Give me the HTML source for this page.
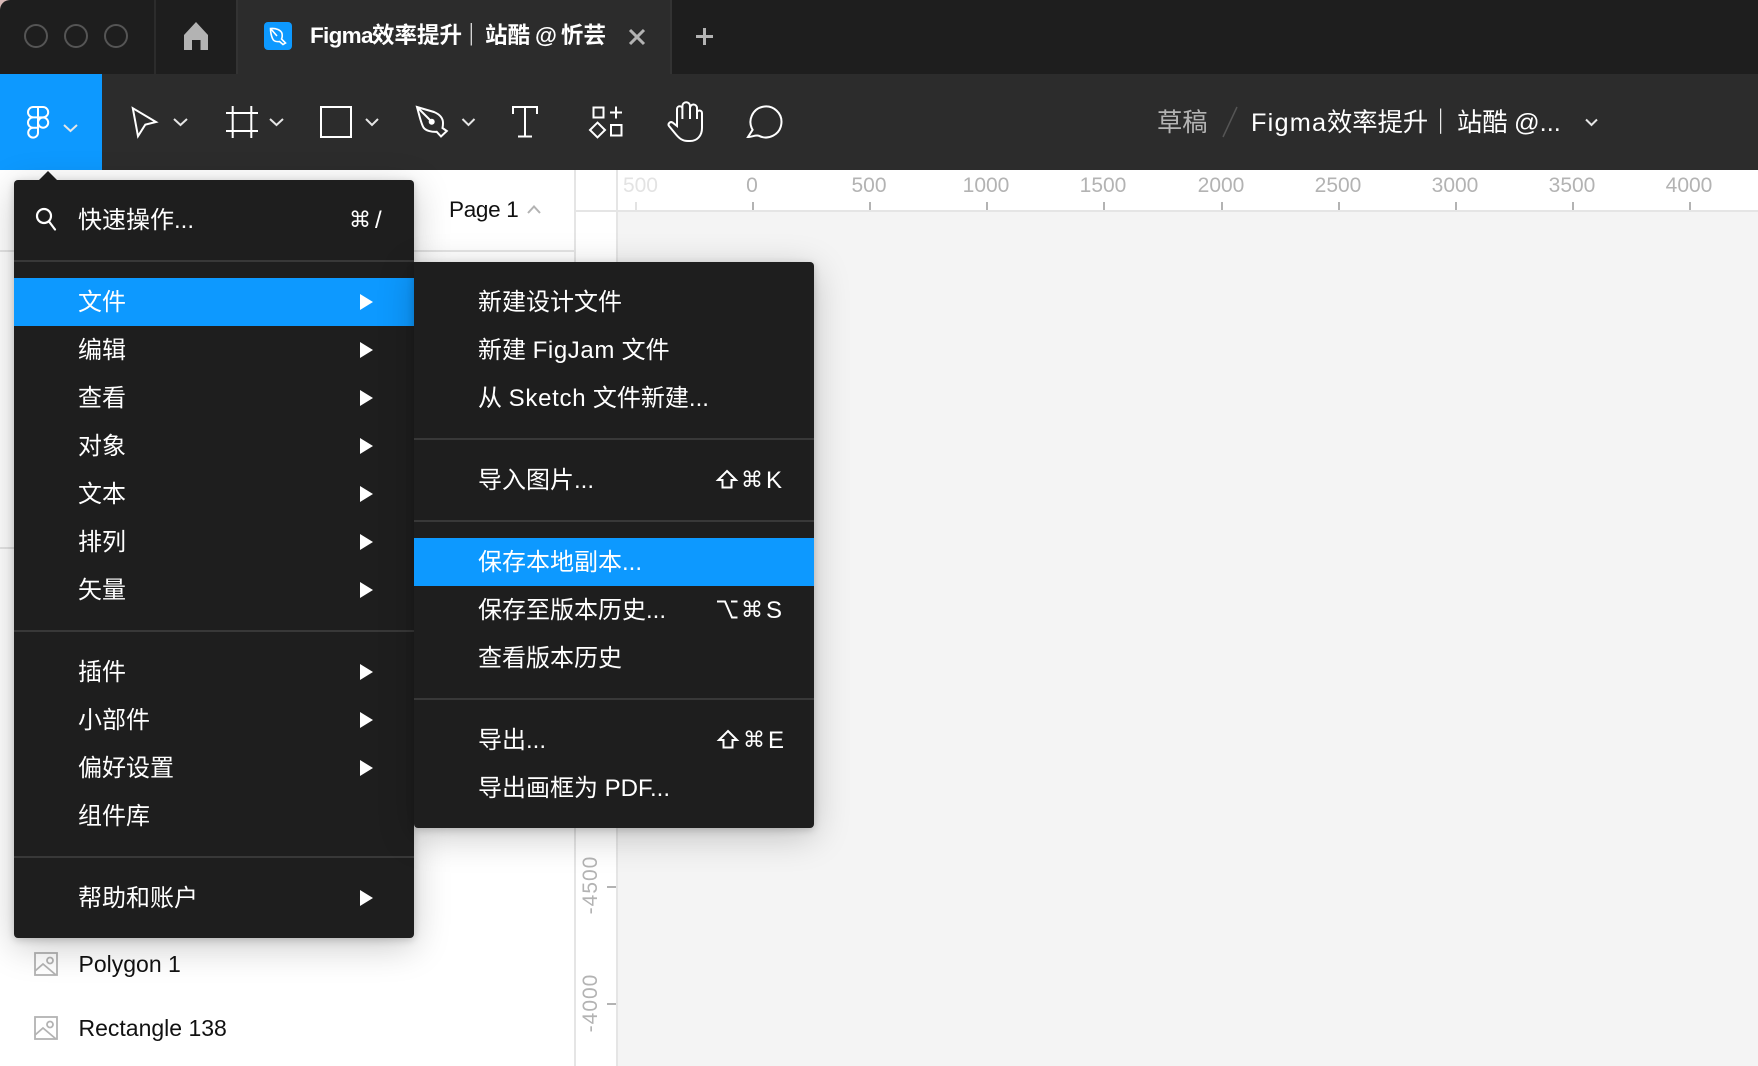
<!DOCTYPE html>
<html lang="zh"><head><meta charset="utf-8"><title>Figma</title>
<style>
html,body{margin:0;padding:0;width:1758px;height:1066px;overflow:hidden;background:#fff}
body{position:relative;font-family:"Liberation Sans","Noto Sans CJK SC",sans-serif;-webkit-font-smoothing:antialiased}
div,span,svg{position:absolute}
span.i{position:static}
svg{left:0;top:0;overflow:visible}
.r{left:0;width:400px;height:48px;line-height:50px;white-space:nowrap;color:#fff;font-size:24px}
.h{background:#0d99ff}
.l,.ls{left:64px;position:absolute}
.a{left:346px;top:16px;width:0;height:0;border-left:13px solid #fff;border-top:8px solid transparent;border-bottom:8px solid transparent}
.d{height:2px;background:#383838;left:0;right:0}
.rt{color:#b3b3b3;font-size:21px;line-height:24px;top:174px;width:80px;text-align:center}
.tk{top:202px;width:2px;height:8px;background:#b3b3b3}
.sc{font-size:24px;color:#fff;line-height:50px;top:0}
.sy{font-family:"DejaVu Sans",sans-serif;font-size:22px}
.tb,.bc{white-space:nowrap}
.tb{top:20px;line-height:32px;font-size:22.5px;font-weight:700;color:#fff}
.bc{top:105px;line-height:36px;font-size:25.3px;color:#fff}
.v{left:551px;width:80px;height:24px;line-height:24px;text-align:center;color:#b3b3b3;font-size:21px;letter-spacing:1px;transform:rotate(-90deg)}
</style></head><body>
<!-- window corner -->
<div style="left:0;top:0;width:12px;height:12px;background:#d8b9b7"></div>
<!-- tab bar -->
<div style="left:0;top:0;width:1758px;height:74px;background:#1e1e1e;border-top-left-radius:10px"></div>
<div style="left:237px;top:0;width:433px;height:74px;background:#2c2c2c"></div>
<div style="left:154px;top:0;width:2px;height:74px;background:#2c2c2c"></div>
<div style="left:236px;top:0;width:2px;height:74px;background:#333"></div>
<div style="left:670px;top:0;width:2px;height:74px;background:#333"></div>
<!-- toolbar -->
<div style="left:0;top:74px;width:1758px;height:96px;background:#2c2c2c"></div>
<div style="left:0;top:74px;width:102px;height:96px;background:#0d99ff"></div>
<!-- tab text -->
<div class="tb" style="left:310px;letter-spacing:-.7px">Figma</div>
<div class="tb" style="left:372px">效率提升</div>
<div class="tb" style="left:460px">｜</div>
<div class="tb" style="left:485px">站酷</div>
<div class="tb" style="left:535px">@</div>
<div class="tb" style="left:561px">忻芸</div>
<div class="bc" style="left:1157px;color:#b3b3b3">草稿</div>
<div class="bc" style="left:1251px;letter-spacing:1.200px">Figma</div>
<div class="bc" style="left:1327px">效率提升</div>
<div class="bc" style="left:1428px">｜</div>
<div class="bc" style="left:1457px">站酷</div>
<div class="bc" style="left:1514px">@...</div>
<!-- panel + canvas -->
<div style="left:617px;top:212px;width:1141px;height:854px;background:#f4f4f4"></div>
<div style="left:574px;top:170px;width:2px;height:896px;background:#e5e5e5"></div>
<div style="left:616px;top:170px;width:2px;height:896px;background:#e5e5e5"></div>
<div style="left:575px;top:210px;width:1183px;height:2px;background:#e5e5e5"></div>
<div style="left:0;top:250px;width:575px;height:2px;background:#e5e5e5"></div>
<div style="left:0;top:547px;width:20px;height:2px;background:#e5e5e5"></div>
<div style="left:449px;top:194px;line-height:32px;font-size:22.5px;letter-spacing:-.3px;color:#111;white-space:nowrap">Page 1</div>
<!-- top ruler -->
<div class="rt" style="left:618px;width:40px;color:#e3e3e3;text-align:right;overflow:hidden">500</div>
<div class="rt" style="left:712px">0</div><div class="rt" style="left:829px">500</div><div class="rt" style="left:946px">1000</div><div class="rt" style="left:1063px">1500</div><div class="rt" style="left:1181px">2000</div><div class="rt" style="left:1298px">2500</div><div class="rt" style="left:1415px">3000</div><div class="rt" style="left:1532px">3500</div><div class="rt" style="left:1649px">4000</div>
<div class="tk" style="left:635px;background:#e3e3e3"></div><div class="tk" style="left:752px"></div><div class="tk" style="left:869px"></div><div class="tk" style="left:986px"></div><div class="tk" style="left:1103px"></div><div class="tk" style="left:1221px"></div><div class="tk" style="left:1338px"></div><div class="tk" style="left:1455px"></div><div class="tk" style="left:1572px"></div><div class="tk" style="left:1689px"></div>
<!-- left ruler -->
<div class="v" style="top:873px">-4500</div>
<div class="v" style="top:991px">-4000</div>
<div style="left:607px;top:886px;width:9px;height:2px;background:#b3b3b3"></div>
<div style="left:607px;top:1003px;width:9px;height:2px;background:#b3b3b3"></div>
<!-- layers -->
<div style="left:78.500px;top:948px;line-height:32px;font-size:23px;color:#111;white-space:nowrap">Polygon 1</div>
<div style="left:78.500px;top:1012px;line-height:32px;font-size:23px;color:#111;white-space:nowrap">Rectangle 138</div>
<!-- icons svg -->
<svg width="1758" height="1066" fill="none" stroke="#fff" stroke-width="2">
<g stroke="#555"><circle cx="36" cy="36" r="11"/><circle cx="76" cy="36" r="11"/><circle cx="116" cy="36" r="11"/></g>
<path d="M196 22L208 35V50H200.500V40H192V50H184V35Z" fill="#b3b3b3" stroke="none"/>
<rect x="264" y="22" width="28" height="28" rx="4" fill="#0d99ff" stroke="none"/>
<path d="M270.500 28.500C276 28 281 30 282 33.500C282.500 36 282 38 281.500 39L285.500 43L283 44.500L279.500 41.500C276 42 273.500 41 272.500 38.500C271 35 270.500 32 270.500 28.500ZM270.500 28.500L277 36" stroke-width="1.600"/>
<path d="M630 30L644 44M644 30L630 44" stroke="#b3b3b3" stroke-width="3"/>
<path d="M704.500 28V45M696 36.500H713" stroke="#b3b3b3" stroke-width="3"/>
<!-- figma logo -->
<path d="M38 107H33.200a5.200 5.200 0 0 0 0 10.400H38ZM38 107H43a5.200 5.200 0 0 1 0 10.400H38ZM38 117.400H33.200a5.200 5.200 0 0 0 0 10.400H38ZM48.200 122.600a5.100 5.100 0 1 1-10.200 0a5.100 5.100 0 0 1 10.200 0ZM38 127.800H33.200a4.900 4.900 0 1 0 4.800 4.900Z"/>
<g stroke="#e6e6e6"><path d="M64 125l6.500 6 6.500-6"/><path d="M174 119l6.500 6 6.500-6"/><path d="M270 119l6.500 6 6.500-6"/><path d="M366 119l6 6 6-6"/><path d="M462.500 119l6 6 6-6"/><path d="M1586 119.500l5.500 5.500 5.500-5.500"/></g>
<!-- cursor -->
<path d="M132.800 108.200L156 122L145.300 124.600L138 136.200Z"/>
<!-- frame -->
<path d="M226 113H258M226 131H258M232.700 106V138M251.300 106V138"/>
<!-- rect -->
<rect x="321" y="107" width="30" height="30"/>
<!-- pen -->
<path d="M417 107L434 112C440 114.500 443 118 443 123C443 125 442.800 126.500 442.500 128L446.800 131L441 136.500L436.700 131.800C432 132 426 131 423.500 127.500C421 123.500 419 114 417 107ZM417 107L431.500 121.500"/>
<circle cx="431.700" cy="121.700" r="3" fill="#fff" stroke="none"/>
<!-- T -->
<path d="M513 114V107H537V114M525 107V136.500M518 136.500H532"/>
<!-- components -->
<rect x="593.500" y="107.500" width="10" height="10"/>
<path d="M610 112.500H622M616 106.500V118.500"/>
<path d="M597.500 122.600L605 130L597.500 137.400L590 130Z"/>
<rect x="611" y="125" width="10.500" height="10.500"/>
<!-- hand -->
<path d="M682.400 119V106a3.800 3.800 0 0 1 7.600 0V119M690 119V108a3.500 3.500 0 0 1 7 0V119M697 119V113a2.500 2.500 0 0 1 5 0V128c0 8-5 13-12 13h-2c-6 0-9-3-12-6.500L669 126c-1.500-2 1-5 3.500-3.500L677 126V109a2.700 2.700 0 0 1 5.400 0"/>
<!-- comment -->
<path d="M752.600 129.800A15.500 15.500 0 1 1 759 135.800C756 134.500 752 137 748 137Z"/>
<!-- breadcrumb slash -->
<path d="M1237 107L1223 137" stroke="#555" stroke-width="1.500"/>
<!-- page chevron -->
<path d="M528 213l6-6.500 6 6.500" stroke="#b3b3b3"/>
<!-- layer icons -->
<g stroke="#b3b3b3" stroke-width="1.800"><rect x="35" y="953" width="22" height="22"/><path d="M35 971L43 964L56 975"/><circle cx="50" cy="960.500" r="3"/><rect x="35" y="1017" width="22" height="22"/><path d="M35 1035L43 1028L56 1039"/><circle cx="50" cy="1024.500" r="3"/></g>
</svg>
<!-- main menu -->
<div style="left:38px;top:171px;width:0;height:0;border-left:10px solid transparent;border-right:10px solid transparent;border-bottom:10px solid #1e1e1e"></div>
<div style="left:14px;top:180px;width:400px;height:758px;background:#1e1e1e;border-radius:4px;box-shadow:0 8px 36px rgba(0,0,0,.22),0 2px 8px rgba(0,0,0,.18)">
<svg width="400" height="758" fill="none" stroke="#fff" stroke-width="2.200"><circle cx="30" cy="36" r="7"/><path d="M35 41.500L41 49.500" stroke-linecap="round"/></svg>
<div class="r" style="top:15px;line-height:52px"><span class="l">快速操作...</span><span class="sc sy" style="left:335px;line-height:52px">⌘</span><span class="sc" style="left:361px;line-height:52px">/</span></div>
<div class="d" style="top:80px"></div>
<div class="r h" style="top:98px"><span class="l">文件</span><span class="a"></span></div>
<div class="r" style="top:146px"><span class="l">编辑</span><span class="a"></span></div>
<div class="r" style="top:194px"><span class="l">查看</span><span class="a"></span></div>
<div class="r" style="top:242px"><span class="l">对象</span><span class="a"></span></div>
<div class="r" style="top:290px"><span class="l">文本</span><span class="a"></span></div>
<div class="r" style="top:338px"><span class="l">排列</span><span class="a"></span></div>
<div class="r" style="top:386px"><span class="l">矢量</span><span class="a"></span></div>
<div class="d" style="top:450px"></div>
<div class="r" style="top:468px"><span class="l">插件</span><span class="a"></span></div>
<div class="r" style="top:516px"><span class="l">小部件</span><span class="a"></span></div>
<div class="r" style="top:564px"><span class="l">偏好设置</span><span class="a"></span></div>
<div class="r" style="top:612px"><span class="l">组件库</span></div>
<div class="d" style="top:676px"></div>
<div class="r" style="top:694px"><span class="l">帮助和账户</span><span class="a"></span></div>
</div>
<!-- submenu -->
<div style="left:414px;top:262px;width:400px;height:566px;background:#1e1e1e;border-radius:0 4px 4px 4px;box-shadow:0 8px 36px rgba(0,0,0,.22),0 2px 8px rgba(0,0,0,.18)">
<div class="r" style="top:16px"><span class="ls">新建设计文件</span></div>
<div class="r" style="top:64px"><span class="ls">新建 <span class="i" style="letter-spacing:.6px">FigJam</span> 文件</span></div>
<div class="r" style="top:112px"><span class="ls">从 <span class="i" style="letter-spacing:.7px">Sketch</span> 文件新建...</span></div>
<div class="d" style="top:176px"></div>
<div class="r" style="top:194px"><span class="ls">导入图片...</span><span class="sc sy" style="left:327px">⌘</span><span class="sc" style="left:352px">K</span></div>
<div class="d" style="top:258px"></div>
<div class="r h" style="top:276px"><span class="ls">保存本地副本...</span></div>
<div class="r" style="top:324px"><span class="ls">保存至版本历史...</span><span class="sc sy" style="left:327px">⌘</span><span class="sc" style="left:352px">S</span></div>
<div class="r" style="top:372px"><span class="ls">查看版本历史</span></div>
<div class="d" style="top:436px"></div>
<div class="r" style="top:454px"><span class="ls">导出...</span><span class="sc sy" style="left:329px">⌘</span><span class="sc" style="left:354px">E</span></div>
<div class="r" style="top:502px"><span class="ls">导出画框为 PDF...</span></div>
</div>
<!-- shortcut modifier symbols -->
<svg width="1758" height="1066" fill="none" stroke="#fff" stroke-width="2">
<path d="M727 471L736 480H731.500V487.500H722.500V480H718Z"/>
<path d="M728 731L737 740H732.500V747.500H723.500V740H719Z"/>
<path d="M717 601.500H725L732 617.500H737.500M731 601.500H737.500"/>
</svg>
</body></html>
